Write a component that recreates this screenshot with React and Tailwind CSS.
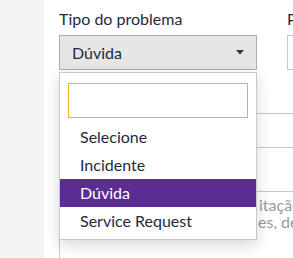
import React from "react";

const options = ["Selecione", "Incidente", "Dúvida", "Service Request"];

const Field = ({ label, children, className = "" }) => (
  <div className={className}>
    <label className="block text-[16px] leading-[22px] text-[#1f2a3c] mb-[5px] whitespace-nowrap">
      {label}
    </label>
    {children}
  </div>
);

export default function App() {
  const selected = "Dúvida";

  return (
    <div
      className="flex w-[293px] h-[258px] overflow-hidden bg-white"
      style={{ fontFamily: "Lato, 'Open Sans', sans-serif" }}
    >
      <div className="w-[44px] shrink-0 bg-[#f3f3f3]" />
      <div className="flex-1 pl-[15px] pt-[8px]">
        <div className="grid grid-cols-[198px_198px] gap-x-[30px]">
          <Field label="Tipo do problema" className="relative">
            <div className="flex h-[35px] items-center justify-between border border-[#adadad] bg-[#e6e6e6] pl-[12px] pr-[12px]">
              <span className="text-[16px] text-[#1f2a3c]">{selected}</span>
              <svg width="8" height="5" viewBox="0 0 8 5">
                <path d="M0 0h8L4 4.5z" fill="#333" />
              </svg>
            </div>

            {/* dropdown aberto */}
            <div className="absolute left-0 top-[64px] z-10 w-[198px] border border-[#c8c8c8] bg-white pt-[10px] pb-[4px] shadow-[0_5px_14px_rgba(0,0,0,0.16)]">
              <div className="mx-[8px] h-[35px] border border-[#f2b01e] bg-white" />
              <ul className="mt-[5px]">
                {options.map((opt) => (
                  <li
                    key={opt}
                    className={
                      opt === selected
                        ? "flex h-[28px] items-center pl-[20px] text-[16px] bg-[#5c2d91] text-white"
                        : "flex h-[28px] items-center pl-[20px] text-[16px] text-[#1f2a3c]"
                    }
                  >
                    {opt}
                  </li>
                ))}
              </ul>
            </div>
          </Field>

          <Field label="Prioridade">
            <div className="h-[35px] border border-[#c8c8c8] bg-white" />
          </Field>
        </div>

        <Field label="Título" className="mt-[16px]">
          <div className="h-[35px] w-[400px] border border-[#c8c8c8] bg-white" />
        </Field>

        <Field label="Descrição" className="mt-[16px]">
          <div className="h-[100px] w-[400px] border border-[#c8c8c8] bg-white px-[12px] pt-[4px] text-[16px] leading-[17px] text-[#9a9a9a] whitespace-nowrap">
            <div className="flex">
              <span className="w-[187px] shrink-0 overflow-hidden">Descreva aqui a sua solic</span>
              <span>itação de suporte</span>
            </div>
            <div className="flex">
              <span className="w-[186px] shrink-0 overflow-hidden">com o máximo de detalh</span>
              <span>es, deixando claro</span>
            </div>
          </div>
        </Field>
      </div>
    </div>
  );
}
